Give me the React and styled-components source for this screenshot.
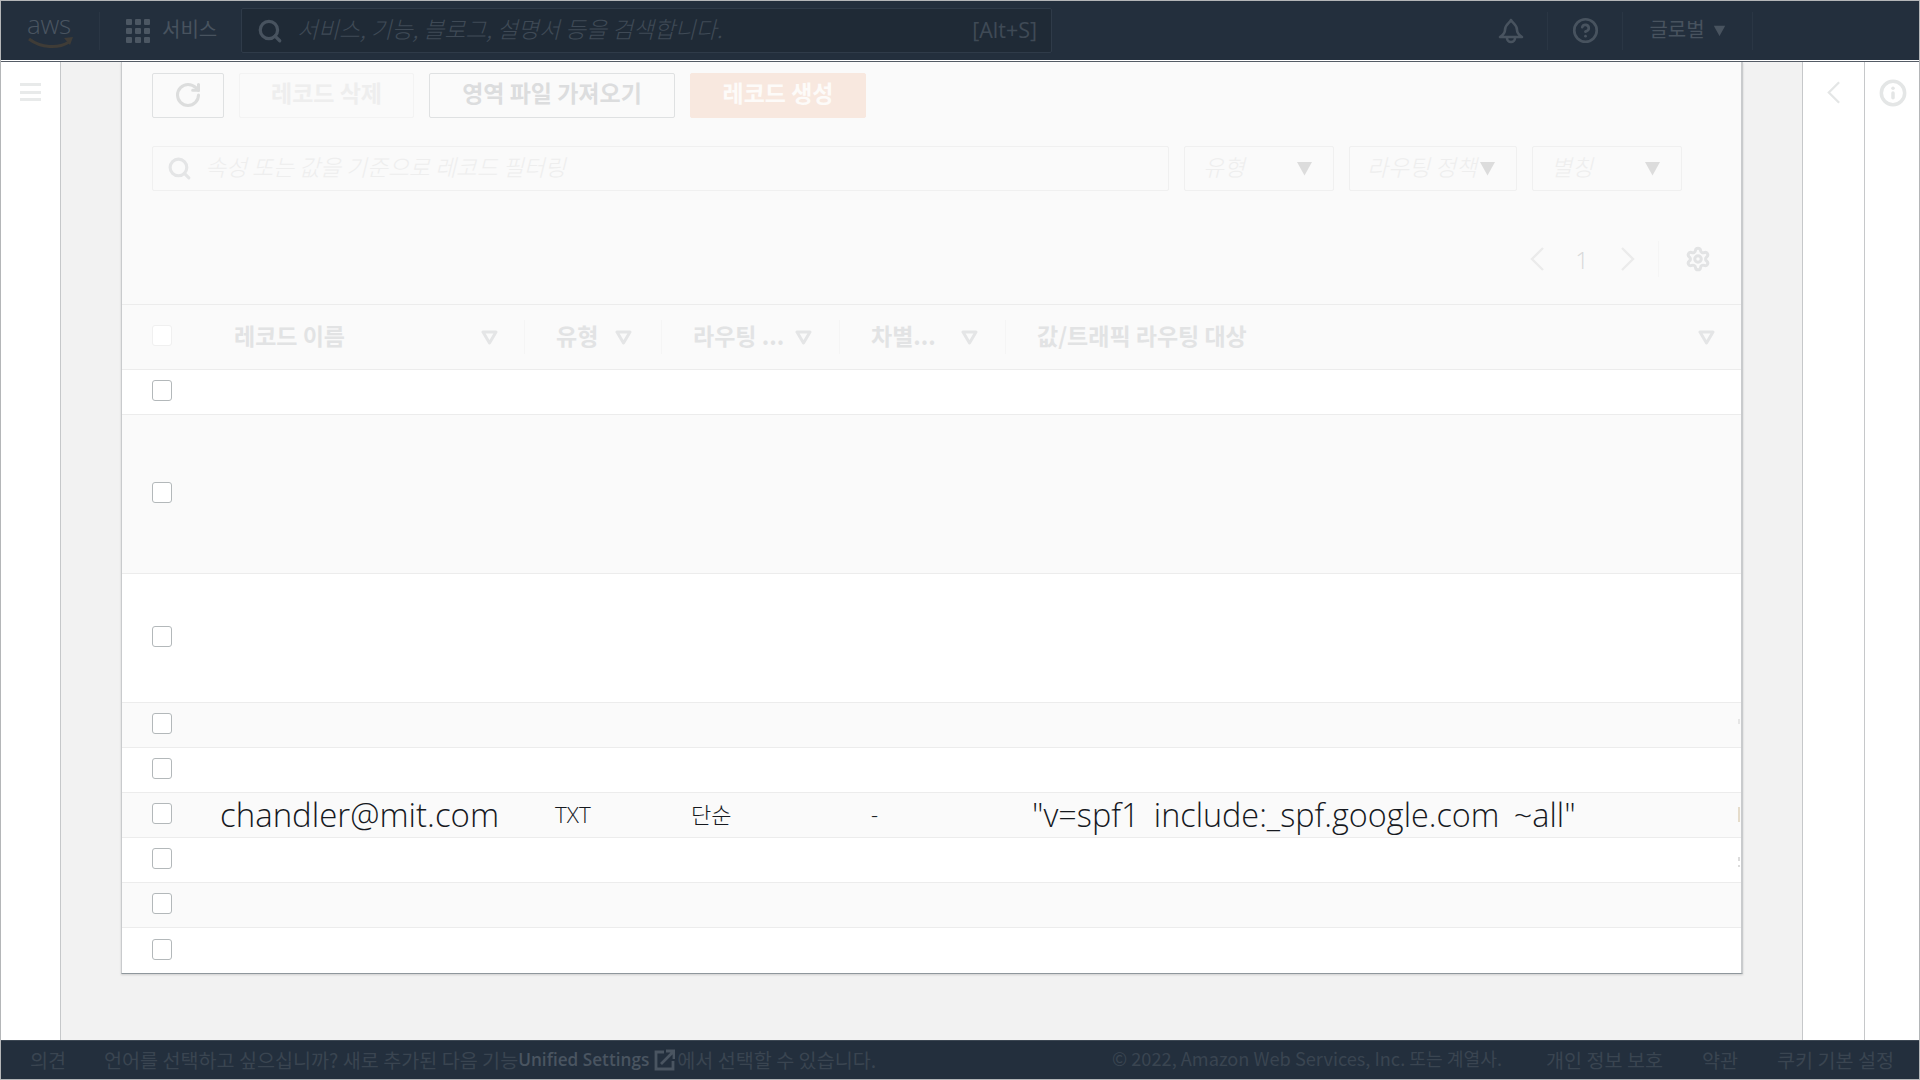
import React from 'react'
import styled, { createGlobalStyle } from 'styled-components'
import { RotateCw, Settings, CircleHelp, Info, Search } from 'lucide-react'

const KR = `"Noto Sans CJK KR", "Noto Sans", sans-serif`
const LATIN = `"Open Sans", "Noto Sans CJK KR", sans-serif`

const GlobalStyle = createGlobalStyle`
    html, body {
        margin: 0;
        padding: 0;
        overflow: hidden;
        background: #fff;
        font-family: ${KR};
    }
    * { box-sizing: border-box; }
`

const Frame = styled.div`
    width: 1920px;
    height: 1080px;
    border: 1px solid #b4b6b8;
    display: flex;
    flex-direction: column;
    overflow: hidden;
`

const TopBar = styled.header`
    flex: 0 0 59px;
    background: #232f3d;
    display: flex;
    align-items: center;
    color: #48535f;
`
const TopRule = styled.div`
    flex: 0 0 2px;
    background: #fff;
    border-bottom: 1px solid #555c66;
`
const Logo = styled.div`
    width: 99px;
    height: 38px;
    padding-left: 26px;
    border-right: 1px solid #2a3644;
`
const LogoText = styled.span`
    display: block;
    font-family: "Open Sans", sans-serif;
    font-size: 26px;
    font-weight: 300;
    line-height: 24px;
    letter-spacing: -0.3px;
    color: #4a5561;
`
const ServiceMenu = styled.div`
    width: 141px;
    display: flex;
    align-items: center;
    gap: 12px;
    padding-left: 26px;
    font-size: 20px;
    white-space: nowrap;
    span { margin-top: -4px; }
`
const SearchBox = styled.div`
    width: 811px;
    height: 45px;
    background: #1f2a36;
    border: 1px solid #2f3b49;
    border-radius: 2px;
    display: flex;
    align-items: center;
    padding: 0 14px 0 15px;
    color: #3f4a56;
`
const SearchHint = styled.span`
    flex: 1;
    margin: -4px 0 0 14px;
    font-size: 22.8px;
    font-style: italic;
    font-weight: 300;
`
const KeyHint = styled.span`
    font-family: ${LATIN};
    font-size: 21.5px;
    margin-top: -2px;
`
const TopActions = styled.div`
    margin-left: auto;
    display: flex;
    align-items: center;
    height: 38px;
    margin-right: 166px;
`
const TopAction = styled.div`
    width: ${p => p.$w}px;
    height: 100%;
    display: flex;
    align-items: center;
    justify-content: center;
    gap: 8px;
    border-right: 1px solid #2a3644;
    font-size: 20px;
    span { margin-top: -4px; }
`

const Body = styled.div`
    flex: 1;
    display: flex;
    min-height: 0;
`
const SideRail = styled.aside`
    flex: 0 0 ${p => p.$w}px;
    background: #fff;
    border-right: ${p => (p.$left ? '1px solid #c6c8ca' : 'none')};
    border-left: ${p => (p.$left ? 'none' : '1px solid #c6c8ca')};
    padding-top: ${p => p.$top}px;
    padding-left: ${p => p.$inset || 0}px;
    display: flex;
    justify-content: center;
    color: #e6e8e8;
`
const Hamburger = styled.div`
    width: 21px;
    height: 18px;
    display: flex;
    flex-direction: column;
    justify-content: space-between;
    span {
        display: block;
        height: 3px;
        background: #e8eaea;
    }
`
const Main = styled.main`
    flex: 1;
    background: #f2f2f2;
    padding: 0 59px 0 60px;
    min-width: 0;
`
const Card = styled.section`
    background: #fff;
    border-left: 1px solid #c9cbcd;
    border-right: 2px solid #c9cbcd;
    border-bottom: 1px solid #8f979c;
    box-shadow: 0 1px 2px rgba(0, 0, 0, 0.15);
`
const CardTop = styled.div`
    height: 242px;
    background: #fafafa;
    padding: 11px 0 0 30px;
`
const ToolRow = styled.div`
    display: flex;
    gap: 15px;
`
const ToolButton = styled.div`
    width: ${p => p.$w}px;
    height: 45px;
    background: ${p => (p.$primary ? '#f8e8df' : 'transparent')};
    color: ${p => (p.$primary ? '#fdfbf9' : p.$muted ? '#eeeeee' : '#dcddde')};
    border: 1px solid ${p => (p.$primary ? '#f8e8df' : p.$muted ? '#f3f3f3' : '#dfe1e2')};
    border-radius: 2px;
    display: flex;
    align-items: center;
    justify-content: center;
    padding-bottom: ${p => (p.$icon ? 2 : 8)}px;
    font-size: 23px;
    font-weight: 700;
    white-space: nowrap;
`
const FilterRow = styled.div`
    display: flex;
    gap: 15px;
    margin-top: 28px;
`
const FilterField = styled.div`
    width: ${p => p.$w}px;
    height: 45px;
    border: 1px solid #f0f0f0;
    border-radius: 2px;
    display: flex;
    align-items: center;
    padding: 0 ${p => p.$right}px 0 ${p => p.$pad}px;
    color: #eeeeee;
    font-size: 22.8px;
    font-style: italic;
    font-weight: 300;
    white-space: nowrap;
`
const FilterText = styled.span`
    flex: 1;
    margin: -4px 0 0 ${p => p.$gap || 0}px;
`
const Pager = styled.div`
    display: flex;
    align-items: center;
    justify-content: flex-end;
    height: 40px;
    margin-top: 48px;
    padding-right: 30px;
    color: #eaeaea;
`
const PageNumber = styled.span`
    margin: 0 31px 0 30px;
    color: #d7d8d9;
    font-family: ${LATIN};
    font-size: 24px;
    font-weight: 300;
`
const PagerRule = styled.span`
    width: 1px;
    height: 36px;
    background: #f5f5f5;
    margin: 0 26px 0 22px;
`

const Columns = `81px 322px 137px 178px 166px 1fr`
const TableHead = styled.div`
    display: grid;
    grid-template-columns: ${Columns};
    height: 66px;
    background: #fafafa;
    border-top: 1px solid #ececec;
    border-bottom: 1px solid #ececec;
`
const HeadCell = styled.div`
    display: flex;
    align-items: center;
    justify-content: space-between;
    padding: 0 ${p => p.$right}px 0 31px;
    color: #e2e3e4;
    font-size: 23px;
    font-weight: 700;
    white-space: nowrap;
    position: relative;
    &:after {
        content: '';
        position: absolute;
        right: 0;
        top: 15px;
        bottom: 15px;
        width: 1px;
        background: ${p => (p.$last ? 'transparent' : '#f5f5f5')};
    }
`
const HeadLabel = styled.span`
    margin-top: -5px;
`
const Row = styled.div`
    display: grid;
    grid-template-columns: ${Columns};
    height: ${p => p.$h}px;
    background: ${p => (p.$odd ? '#fafafa' : '#ffffff')};
    border-bottom: ${p => (p.$end ? 'none' : '1px solid #ececec')};
    align-items: center;
    position: relative;
`
const CheckCell = styled.div`
    padding-left: 30px;
    display: flex;
    align-items: center;
`
const Check = styled.span`
    width: 20px;
    height: 21px;
    margin-bottom: 3px;
    background: #fff;
    border: 1.5px solid ${p => (p.$faint ? '#f0f0f0' : '#b3b8ba')};
    border-radius: 3px;
`
const Cell = styled.div`
    padding-left: ${p => p.$pad}px;
    margin-top: -${p => p.$lift || 2}px;
    color: #16191f;
    font-family: ${LATIN};
    font-size: ${p => p.$size}px;
    font-weight: 300;
    word-spacing: ${p => p.$words || 0}px;
    white-space: nowrap;
`
const EdgeMark = styled.span`
    position: absolute;
    right: 1px;
    top: ${p => p.$top}px;
    width: 2px;
    height: ${p => p.$h}px;
    background: ${p => p.$color};
`

const BottomBar = styled.footer`
    flex: 0 0 39px;
    background: #232f3d;
    border-top: 1px solid #3c4753;
    display: flex;
    align-items: center;
    color: #3a4551;
    font-size: 19.6px;
    padding: 0 25px 2px 29px;
    white-space: nowrap;
`
const Feedback = styled.span`
    width: 74px;
`
const LinkText = styled.span`
    color: #4a5561;
    font-family: ${LATIN};
    font-size: 17.2px;
    font-weight: 600;
`
const Legal = styled.span`
    margin-left: auto;
    display: flex;
    gap: 39px;
`
const Copyright = styled.span`
    margin-right: 5px;
    font-size: 18.2px;
`
const IconSlot = styled.span`
    display: inline-flex;
    margin: 2px 2px 0 5px;
`

const FilterCaret = () => (
    <svg width="17" height="15" viewBox="0 0 17 15">
        <path d="M2 2h13L8.5 13z" fill="none" stroke="#e4e5e6" strokeWidth="3" strokeLinejoin="round" />
    </svg>
)
const SolidCaret = ({ size = 17, color = '#dcdcdc' }) => (
    <svg width={size} height={size * 0.88} viewBox="0 0 17 15">
        <path d="M1 1h15L8.5 14.5z" fill={color} />
    </svg>
)
const GridIcon = () => (
    <svg width="24" height="24" viewBox="0 0 24 24" fill="#4c5763">
        {[0, 9, 18].map(y => [0, 9, 18].map(x => <rect key={`${x}-${y}`} x={x} y={y} width="6" height="6" rx="1" />))}
    </svg>
)
const BellIcon = () => (
    <svg width="26" height="26" viewBox="0 0 26 26" fill="none" stroke="#48535f" strokeWidth="2.6" strokeLinejoin="round">
        <path d="M13 2C12 5 7 6 7 12C7 15 5 17 2 19H24C21 17 19 15 19 12C19 6 14 5 13 2Z" />
        <path d="M9 20a4 4 0 0 0 8 0" />
    </svg>
)
const TallChevron = ({ dir, w = 16, h = 24, color = '#ebebeb' }) => (
    <svg width={w} height={h} viewBox="0 0 16 24" fill="none" stroke={color} strokeWidth="2.4">
        <path d={dir === 'left' ? 'M14 1L3 12l11 11' : 'M2 1l11 11L2 23'} />
    </svg>
)
const ExternalIcon = () => (
    <svg width="21" height="22" viewBox="0 0 21 22" fill="none" stroke="#4a5561" strokeWidth="2.8">
        <path d="M10 3H2v17h17v-8" />
        <path d="M7 15L19 3M12 2h8v8" />
    </svg>
)

const rows = [45, 159, 129, 45, 45, 45, 45, 45, 45]

const App = () => {
    return (
        <Frame>
            <GlobalStyle />
            <TopBar>
                <Logo>
                    <LogoText>aws</LogoText>
                    <svg width="48" height="14" viewBox="0 0 46 14" style={{ display: 'block' }}>
                        <path d="M1 3c12 9 29 10 40 3" fill="none" stroke="#3f3c37" strokeWidth="3" />
                        <path d="M36 2l9-1-3 8z" fill="#3f3c37" />
                    </svg>
                </Logo>
                <ServiceMenu><GridIcon /><span>서비스</span></ServiceMenu>
                <SearchBox>
                    <Search size={26} strokeWidth={3} color="#48535f" />
                    <SearchHint>서비스, 기능, 블로그, 설명서 등을 검색합니다.</SearchHint>
                    <KeyHint>[Alt+S]</KeyHint>
                </SearchBox>
                <TopActions>
                    <TopAction $w={74}><BellIcon /></TopAction>
                    <TopAction $w={75}><CircleHelp size={27} strokeWidth={2.4} /></TopAction>
                    <TopAction $w={130}><span>글로벌</span><SolidCaret size={13} color="#48535f" /></TopAction>
                </TopActions>
            </TopBar>
            <TopRule />
            <Body>
                <SideRail $w={60} $left $top={21}>
                    <Hamburger><span /><span /><span /></Hamburger>
                </SideRail>
                <Main>
                    <Card>
                        <CardTop>
                            <ToolRow>
                                <ToolButton $w={72} $icon><RotateCw size={28} strokeWidth={2.6} color="#dcdddd" /></ToolButton>
                                <ToolButton $w={175} $muted>레코드 삭제</ToolButton>
                                <ToolButton $w={246}>영역 파일 가져오기</ToolButton>
                                <ToolButton $w={176} $primary>레코드 생성</ToolButton>
                            </ToolRow>
                            <FilterRow>
                                <FilterField $w={1017} $pad={14} $right={16}>
                                    <Search size={25} strokeWidth={3} color="#e4e5e6" />
                                    <FilterText $gap={13}>속성 또는 값을 기준으로 레코드 필터링</FilterText>
                                </FilterField>
                                <FilterField $w={150} $pad={18} $right={20}><FilterText>유형</FilterText><SolidCaret /></FilterField>
                                <FilterField $w={168} $pad={17} $right={20}><FilterText>라우팅 정책</FilterText><SolidCaret /></FilterField>
                                <FilterField $w={150} $pad={18} $right={20}><FilterText>별칭</FilterText><SolidCaret /></FilterField>
                            </FilterRow>
                            <Pager>
                                <TallChevron dir="left" />
                                <PageNumber>1</PageNumber>
                                <TallChevron dir="right" />
                                <PagerRule />
                                <Settings size={26} strokeWidth={2.8} color="#e2e3e4" />
                            </Pager>
                        </CardTop>
                        <TableHead>
                            <CheckCell><Check $faint /></CheckCell>
                            <HeadCell $right={27}><HeadLabel>레코드 이름</HeadLabel><FilterCaret /></HeadCell>
                            <HeadCell $right={30}><HeadLabel>유형</HeadLabel><FilterCaret /></HeadCell>
                            <HeadCell $right={28}><HeadLabel>라우팅 ...</HeadLabel><FilterCaret /></HeadCell>
                            <HeadCell $right={28}><HeadLabel>차별...</HeadLabel><FilterCaret /></HeadCell>
                            <HeadCell $right={26} $last><HeadLabel>값/트래픽 라우팅 대상</HeadLabel><FilterCaret /></HeadCell>
                        </TableHead>
                        {rows.map((h, i) => (
                            <Row key={i} $h={h} $odd={i % 2 === 1} $end={i === rows.length - 1}>
                                <CheckCell><Check /></CheckCell>
                                {i === 5 && (
                                    <>
                                        <Cell $pad={17} $size={33}>chandler@mit.com</Cell>
                                        <Cell $pad={30} $size={22.5}>TXT</Cell>
                                        <Cell $pad={29} $size={22} $lift={5}>단순</Cell>
                                        <Cell $pad={31} $size={22}>-</Cell>
                                        <Cell $pad={26} $size={32.4} $words={6}>"v=spf1 include:_spf.google.com ~all"</Cell>
                                        <EdgeMark $top={14} $h={15} $color="#e5dccb" />
                                    </>
                                )}
                                {i === 3 && <EdgeMark $top={16} $h={5} $color="#e6e6e6" />}
                                {i === 6 && (
                                    <>
                                        <EdgeMark $top={19} $h={4} $color="#dcdcdc" />
                                        <EdgeMark $top={27} $h={2} $color="#dcdcdc" />
                                    </>
                                )}
                            </Row>
                        ))}
                    </Card>
                </Main>
                <SideRail $w={62} $top={19}>
                    <TallChevron dir="left" w={15} h={23} color="#e4e6e6" />
                </SideRail>
                <SideRail $w={55} $top={17} $inset={2}>
                    <Info size={28} strokeWidth={3} color="#e4e6e6" />
                </SideRail>
            </Body>
            <BottomBar>
                <Feedback>의견</Feedback>
                언어를 선택하고 싶으십니까? 새로 추가된 다음 기능
                <LinkText>Unified Settings</LinkText>
                <IconSlot><ExternalIcon /></IconSlot>
                에서 선택할 수 있습니다.
                <Legal>
                    <Copyright>© 2022, Amazon Web Services, Inc. 또는 계열사.</Copyright>
                    <span>개인 정보 보호</span>
                    <span>약관</span>
                    <span>쿠키 기본 설정</span>
                </Legal>
            </BottomBar>
        </Frame>
    )
}

export default App
